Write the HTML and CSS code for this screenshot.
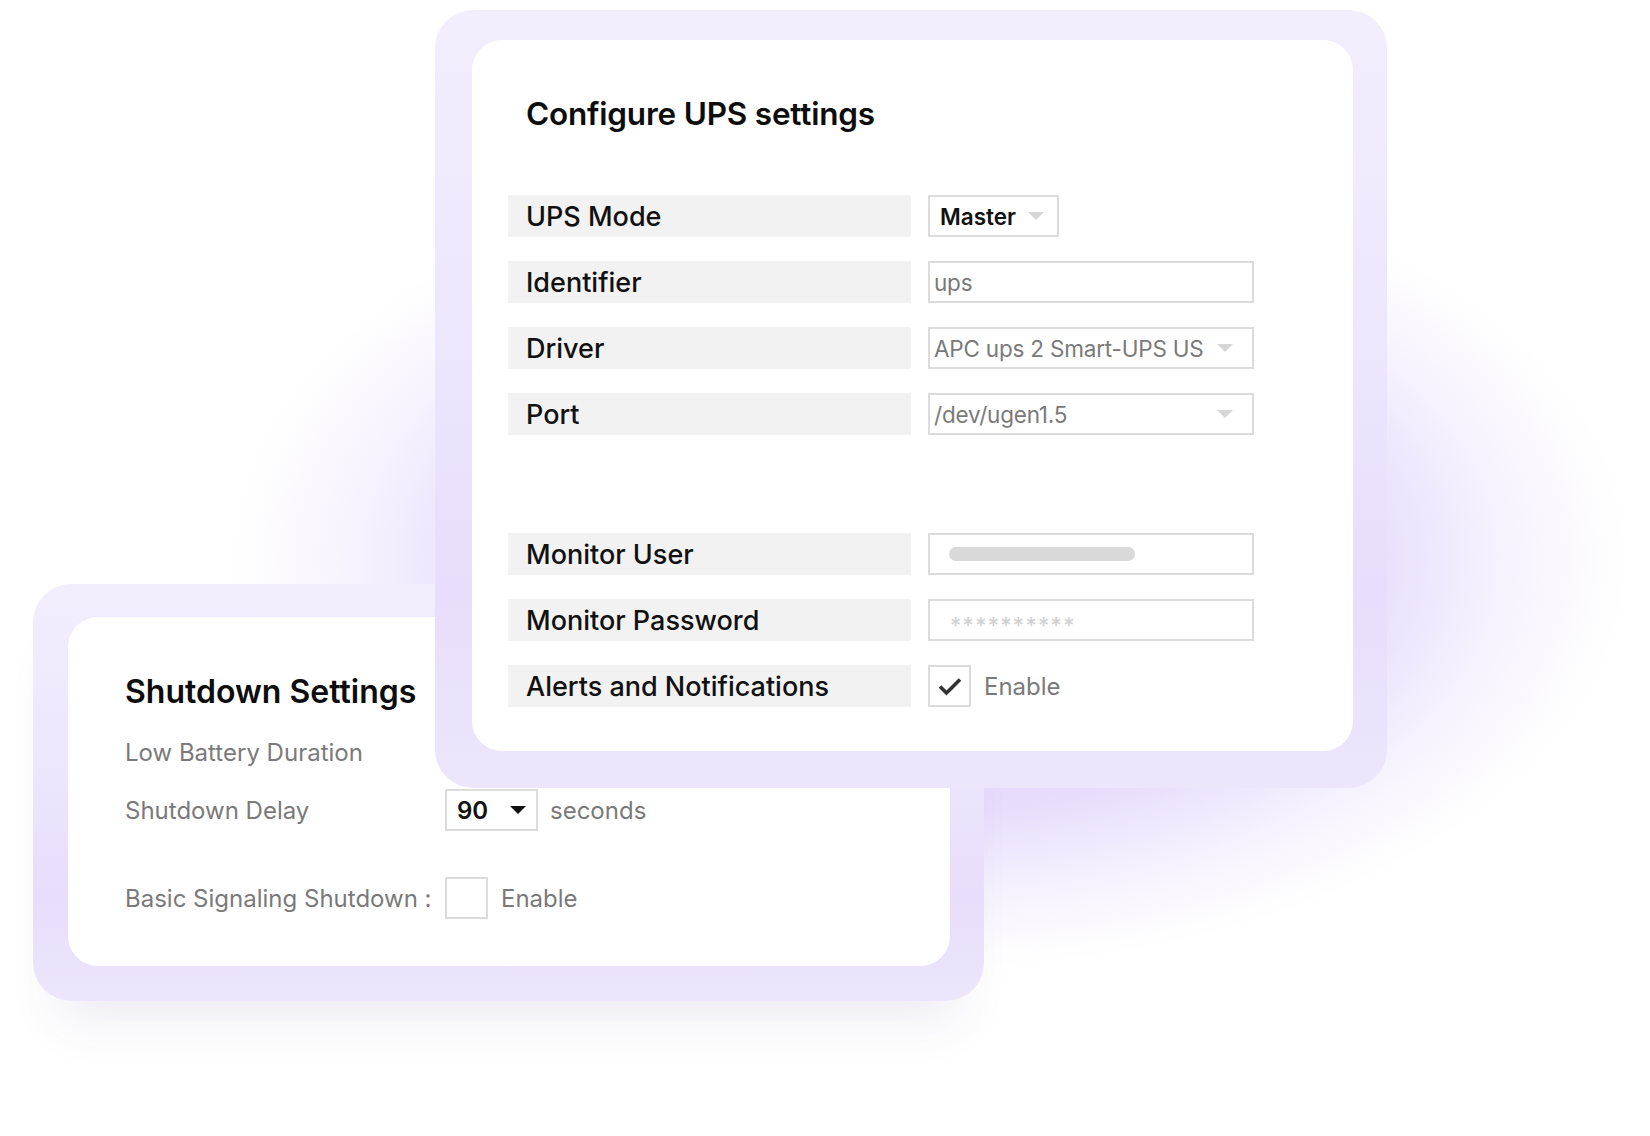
FILE: index.html
```html
<!DOCTYPE html>
<html lang="en">
<head>
<meta charset="utf-8">
<title>Configure UPS settings</title>
<link rel="stylesheet" href="styles.css">
</head>
<body>
<div class="stage">
  <div class="glow"></div>

  <section class="frame frame-shutdown">
    <div class="card card-shutdown">
      <h2 class="title">Shutdown Settings</h2>
      <div class="sd-rows">
        <div class="sd-row">
          <div class="sd-label">Low Battery Duration</div>
        </div>
        <div class="sd-row">
          <div class="sd-label">Shutdown Delay</div>
          <div class="sel90">
            <span>90</span>
            <svg class="arrow" viewBox="0 0 16 8"><polygon points="0,0 16,0 8,8" fill="#111"/></svg>
          </div>
          <span class="unit">seconds</span>
        </div>
        <div class="sd-row sd-row-gap">
          <div class="sd-label">Basic Signaling Shutdown :</div>
          <div class="check-row">
            <div class="checkbox"></div>
            <span class="enable">Enable</span>
          </div>
        </div>
      </div>
    </div>
  </section>

  <section class="frame frame-config">
    <div class="card card-config">
      <h2 class="title">Configure UPS settings</h2>
      <div class="form">
        <div class="label">UPS Mode</div>
        <div class="ctrl">
          <div class="field master">
            <span>Master</span>
            <svg class="arrow" viewBox="0 0 16 8"><polygon points="0,0 16,0 8,8" fill="#d6d6d6"/></svg>
          </div>
        </div>

        <div class="label">Identifier</div>
        <div class="field">ups</div>

        <div class="label">Driver</div>
        <div class="field select">
          <span>APC ups 2 Smart-UPS US</span>
          <svg class="arrow" viewBox="0 0 16 8"><polygon points="0,0 16,0 8,8" fill="#d6d6d6"/></svg>
        </div>

        <div class="label">Port</div>
        <div class="field select">
          <span>/dev/ugen1.5</span>
          <svg class="arrow" viewBox="0 0 16 8"><polygon points="0,0 16,0 8,8" fill="#d6d6d6"/></svg>
        </div>
      </div>

      <div class="form form-second">
        <div class="label">Monitor User</div>
        <div class="field"><span class="bar"></span></div>

        <div class="label">Monitor Password</div>
        <div class="field"><span class="stars">**********</span></div>

        <div class="label">Alerts and Notifications</div>
        <div class="check-row">
          <div class="checkbox">
            <svg width="24" height="19" viewBox="0 0 24 19"><path d="M2 9.5 L8.5 16 L22 2.5" fill="none" stroke="#333" stroke-width="3.6"/></svg>
          </div>
          <span class="enable">Enable</span>
        </div>
      </div>
    </div>
  </section>
</div>
</body>
</html>
```

FILE: styles.css
```css
* { box-sizing: border-box; }

body {
  margin: 0;
  background: #ffffff;
  font-family: Inter, "Noto Sans", "Liberation Sans", sans-serif;
}

.stage {
  position: relative;
  width: 1650px;
  height: 1136px;
  overflow: hidden;
  background: #ffffff;
}

.glow {
  position: absolute;
  inset: 0;
  background:
    radial-gradient(ellipse 700px 410px at 930px 560px,
      rgba(222, 206, 251, 1) 0%,
      rgba(224, 210, 251, 0.95) 40%,
      rgba(228, 215, 252, 0.85) 62%,
      rgba(238, 230, 253, 0.5) 82%,
      rgba(255, 255, 255, 0) 100%);
}

.frame {
  position: absolute;
  border-radius: 38px;
  background: linear-gradient(180deg, #f2eefd 0%, #eee7fd 40%, #e8ddfc 75%, #ede6fb 100%);
}

.frame-config {
  left: 435px;
  top: 10px;
  width: 952px;
  height: 778px;
  padding: 30px 34px 37px 37px;
  z-index: 2;
}

.frame-shutdown {
  left: 33px;
  top: 584px;
  width: 951px;
  height: 417px;
  padding: 33px 34px 35px 35px;
  z-index: 1;
  box-shadow: 0 45px 50px -25px rgba(90, 70, 140, 0.10);
}

.card {
  background: #ffffff;
  border-radius: 30px;
  height: 100%;
}

.title {
  margin: 0;
  font-size: 32px;
  line-height: 40px;
  font-weight: 600;
  color: #0d0d0d;
}

/* Configure card */
.card-config {
  padding: 54px 0 0 36px;
}

.card-config .title {
  padding-left: 18px;
  font-size: 31.5px;
  letter-spacing: -0.2px;
}

.form {
  display: grid;
  grid-template-columns: 403px 326px;
  column-gap: 17px;
  row-gap: 24px;
  grid-auto-rows: 42px;
  margin-top: 61px;
}

.form-second {
  margin-top: 98px;
}

.label {
  background: #f2f2f2;
  display: flex;
  align-items: center;
  padding-left: 18px;
  font-size: 27px;
  font-weight: 500;
  color: #111111;
}

.ctrl {
  display: flex;
}

.field {
  border: 2px solid #dcdcdc;
  background: #ffffff;
  display: flex;
  align-items: center;
  padding: 0 4px;
  font-size: 22.5px;
  letter-spacing: -0.2px;
  color: #7a7a7a;
}

.field.master {
  width: 131px;
  padding-left: 10px;
  gap: 12px;
  color: #111111;
  font-weight: 600;
  letter-spacing: 0;
}

.field.select {
  justify-content: space-between;
  padding-right: 19px;
}

.arrow {
  width: 16px;
  height: 8px;
  flex: none;
}

.bar {
  margin-left: 15px;
  width: 186px;
  height: 14px;
  border-radius: 7px;
  background: #d9d9d9;
}

.stars {
  padding-left: 16px;
  color: #cfcfcf;
  letter-spacing: 1.3px;
  transform: translateY(5px);
}

.check-row {
  display: flex;
  align-items: center;
  gap: 13px;
}

.checkbox {
  width: 43px;
  height: 42px;
  border: 2px solid #dcdcdc;
  background: #ffffff;
  display: flex;
  align-items: center;
  justify-content: center;
  flex: none;
}

.enable {
  font-size: 24px;
  color: #7a7a7a;
}

/* Shutdown card */
.card-shutdown {
  padding: 55px 0 0 57px;
}

.sd-rows {
  margin-top: 19px;
}

.sd-row {
  display: flex;
  align-items: center;
  height: 42px;
}

.sd-row + .sd-row {
  margin-top: 16px;
}

.sd-row.sd-row-gap {
  margin-top: 46px;
}

.sd-label {
  width: 320px;
  flex: none;
  font-size: 24px;
  color: #7a7a7a;
}

.sel90 {
  width: 93px;
  height: 42px;
  border: 2px solid #dcdcdc;
  display: flex;
  align-items: center;
  justify-content: space-between;
  padding: 0 10px;
  font-size: 24px;
  font-weight: 600;
  color: #111111;
}

.unit {
  margin-left: 12px;
  font-size: 24px;
  color: #7a7a7a;
}
```
